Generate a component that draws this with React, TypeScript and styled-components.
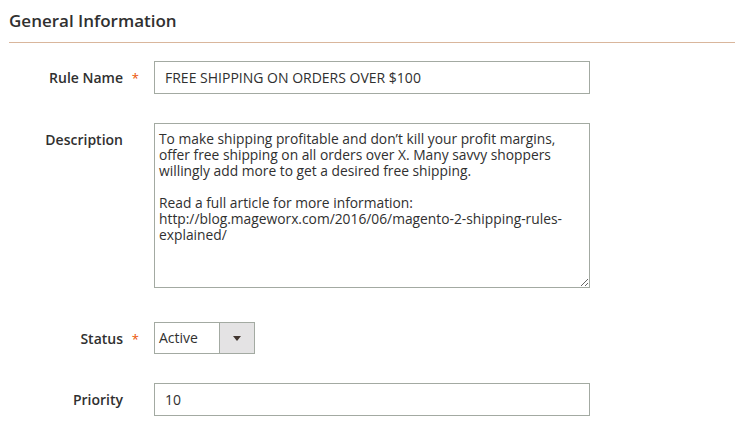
import React from "react";
import styled, { createGlobalStyle } from "styled-components";

const Global = createGlobalStyle`
  html, body { margin: 0; padding: 0; background: #fff; }
  body { font-family: "Open Sans", "Liberation Sans", sans-serif; color: #303030; }
  * { box-sizing: border-box; }
`;

const Page = styled.div`
  width: 742px;
  height: 428px;
  padding: 0 7px 0 9px;
  overflow: hidden;
`;

const Legend = styled.h2`
  margin: 0;
  padding-top: 9px;
  font-size: 17px;
  line-height: 24px;
  font-weight: 600;
  color: #303030;
  padding-bottom: 9px;
  border-bottom: 1px solid #d9b69c;
`;

const Fields = styled.div`
  display: flex;
  flex-direction: column;
  padding-top: 18px;
`;

const Row = styled.div<{ $gap: number }>`
  display: grid;
  grid-template-columns: 145px 436px;
  align-items: start;
  margin-bottom: ${(p) => p.$gap}px;
`;

const Label = styled.label<{ $required?: boolean }>`
  position: relative;
  text-align: right;
  padding: 7px 31px 0 0;
  font-size: 14px;
  line-height: 19px;
  font-weight: 600;
  color: #303030;
  &::after {
    content: ${(p) => (p.$required ? '"*"' : '""')};
    position: absolute;
    right: 15px;
    top: 8px;
    color: #eb5202;
    font-size: 13px;
    font-weight: 400;
  }
`;

const TextInput = styled.input`
  width: 436px;
  height: 33px;
  border: 1px solid #a3aaa2;
  border-radius: 0;
  padding: 0 10px;
  font-family: "Open Sans", "Liberation Sans", sans-serif;
  font-size: 14px;
  color: #303030;
  background: #fff;
  outline: none;
`;

const TextArea = styled.textarea`
  width: 436px;
  height: 165px;
  border: 1px solid #a3aaa2;
  border-radius: 0;
  padding: 7px 16px 7px 4px;
  font-family: "Open Sans", "Liberation Sans", sans-serif;
  font-size: 13.8px;
  line-height: 16px;
  color: #303030;
  background: #fff;
  outline: none;
  resize: both;
  display: block;
`;

const Select = styled.div`
  display: flex;
  width: 101px;
  height: 32px;
  border: 1px solid #a3aaa2;
  background: #fff;
`;

const SelectValue = styled.span`
  flex: 1;
  padding-left: 4px;
  font-size: 14px;
  line-height: 30px;
  color: #303030;
`;

const SelectArrow = styled.span`
  width: 35px;
  border-left: 1px solid #a3aaa2;
  background: #e4e3e4;
  display: flex;
  align-items: center;
  justify-content: center;
  &::before {
    content: "";
    width: 0;
    height: 0;
    border-left: 4px solid transparent;
    border-right: 4px solid transparent;
    border-top: 5px solid #41362f;
    margin-top: 1px;
  }
`;

const description =
  "To make shipping profitable and don\u2019t kill your profit margins, offer free shipping on all orders over X. Many savvy shoppers willingly add more to get a desired free shipping.\n\nRead a full article for more information: http://blog.mageworx.com/2016/06/magento-2-shipping-rules-explained/";

export default function App() {
  return (
    <Page>
      <Global />
      <Legend>General Information</Legend>
      <Fields>
        <Row $gap={29}>
          <Label $required>Rule Name</Label>
          <TextInput readOnly value="FREE SHIPPING ON ORDERS OVER $100" />
        </Row>
        <Row $gap={34}>
          <Label>Description</Label>
          <TextArea readOnly value={description} />
        </Row>
        <Row $gap={29}>
          <Label $required>Status</Label>
          <Select>
            <SelectValue>Active</SelectValue>
            <SelectArrow />
          </Select>
        </Row>
        <Row $gap={0}>
          <Label>Priority</Label>
          <TextInput readOnly value="10" />
        </Row>
      </Fields>
    </Page>
  );
}
